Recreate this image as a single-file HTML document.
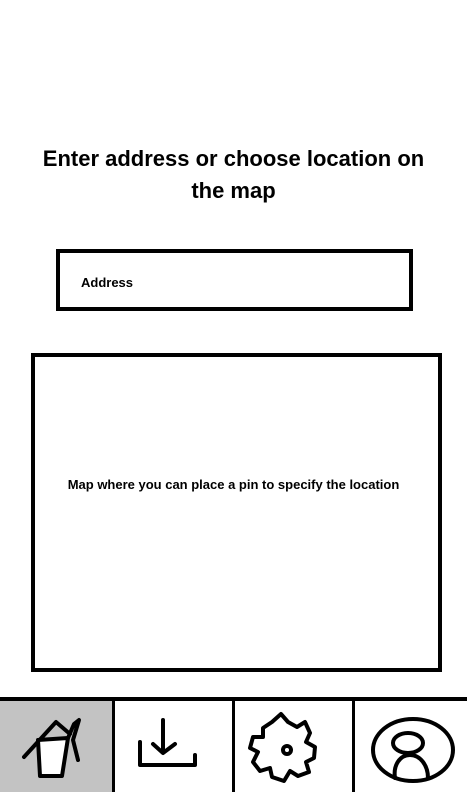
<!DOCTYPE html>
<html><head><meta charset="utf-8"><style>
body{margin:0;width:467px;height:792px;background:#fff;position:relative;overflow:hidden;font-family:"Liberation Sans",sans-serif}
.t{position:absolute;left:0;width:467px;top:143px;text-align:center;font-size:22px;font-weight:bold;line-height:32px;color:#000}
.box{position:absolute;border:4px solid #000;box-sizing:border-box}
.s{position:absolute;font-size:13px;font-weight:bold}
</style></head><body>
<div class="t">Enter address or choose location on<br>the map</div>
<div class="box" style="left:56px;top:249px;width:357px;height:62px"></div>
<div class="s" style="left:81px;top:275px">Address</div>
<div class="box" style="left:31px;top:353px;width:411px;height:319px"></div>
<div class="s" style="left:0;width:467px;text-align:center;top:477px">Map where you can place a pin to specify the location</div>
<div style="position:absolute;left:0;top:697px;width:467px;height:4px;background:#000"></div>
<div style="position:absolute;left:0;top:701px;width:112px;height:91px;background:#c3c3c3"></div>
<div style="position:absolute;left:112px;top:701px;width:3px;height:91px;background:#000"></div>
<div style="position:absolute;left:232px;top:701px;width:3px;height:91px;background:#000"></div>
<div style="position:absolute;left:352px;top:701px;width:3px;height:91px;background:#000"></div>
<svg width="467" height="792" style="position:absolute;left:0;top:0" fill="none" stroke="#000" stroke-width="4" stroke-linecap="round" stroke-linejoin="round">
<path d="M24 757 L56 722 L70 734" />
<path d="M38 740 L40 776 L62 776 L68 738 Z" fill="#fff"/>
<path d="M68 738 L74 724 L79 720 L73 740 L78 760"/>
<path d="M163 720 L163 752 M153 744 L163 753 L175 744"/>
<path d="M140 742 L140 765 L195 765 L195 755"/>
<path d="M272 722 L281 714 L288 722 L297 727 L305 722 L310 733 L306 742 L315 747 L314 758 L306 762 L309 772 L298 776 L290 771 L284 781 L272 777 L270 768 L260 771 L253 762 L258 752 L250 748 L253 737 L263 737 L263 728 Z"/>
<circle cx="287" cy="750" r="4"/>
<ellipse cx="413" cy="750" rx="40" ry="31"/>
<ellipse cx="408" cy="743" rx="15" ry="10"/>
<path d="M395 778 C393 765 400 755 410 755 C420 755 428 765 428 778"/>
</svg>
</body></html>
